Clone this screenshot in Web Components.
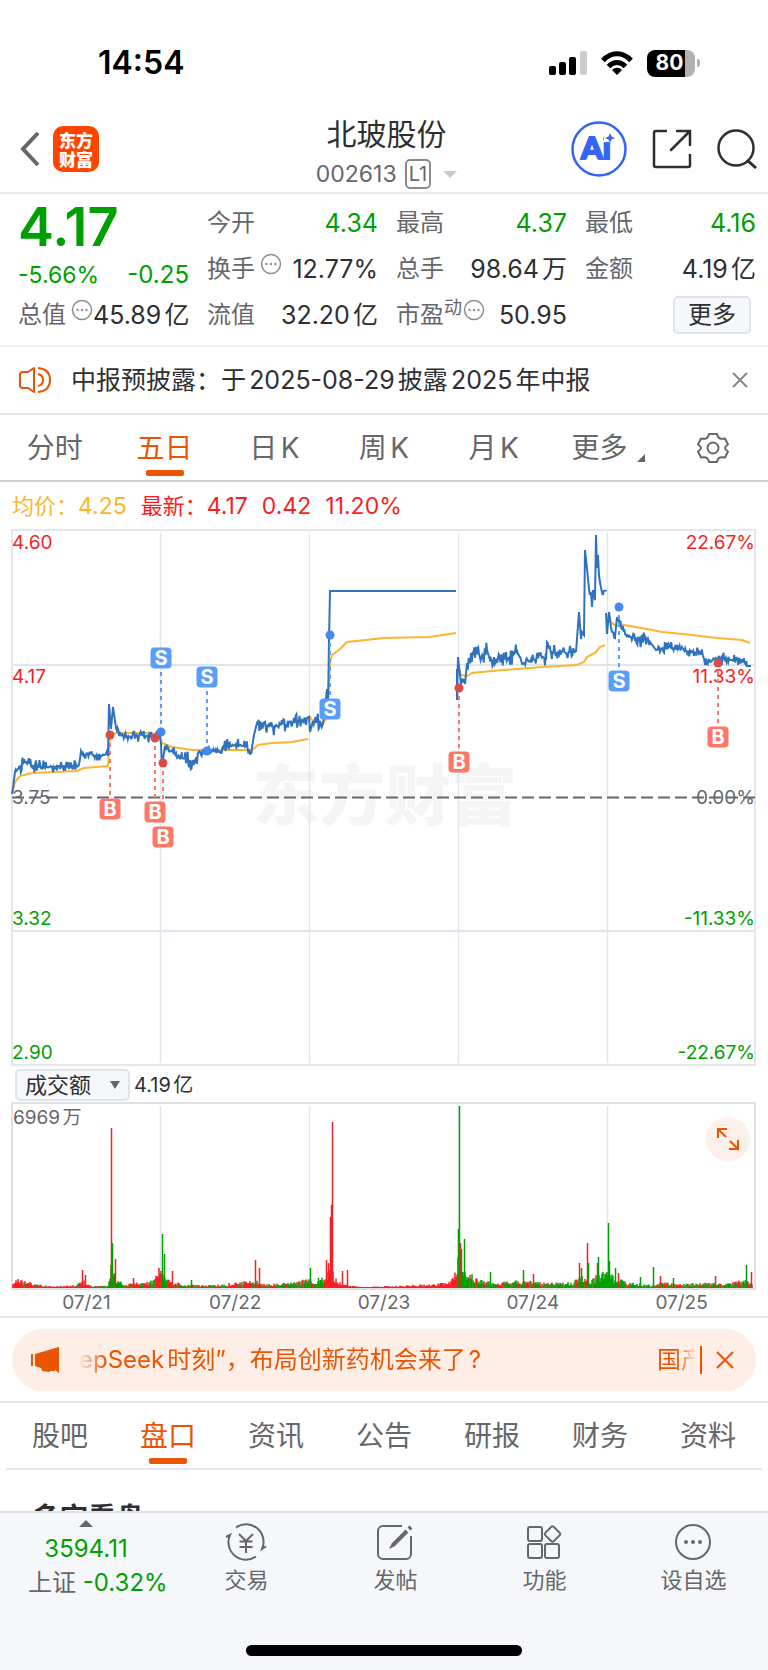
<!DOCTYPE html>
<html lang="zh-CN">
<head>
<meta charset="utf-8">
<meta name="viewport" content="width=device-width, initial-scale=1">
<title>北玻股份 002613</title>
<style>
html, body {
    height: 100%;
    margin: 0;
}

body {
    --orange: #ea5504;
    --green: #00a000;
    --red: #f91e23;
    --text: #2f2f31;
    --muted: #66676a;
    --line: #e6e7ea;
    background: #fff;
    color: var(--text);
    font: 24px/30px Inter, "Noto Sans CJK SC", sans-serif;
    text-autospace: normal;
}
</style>
</head>
<body>

<stock-app></stock-app>

<template id="stock-app">
    <style>
:host { display: flex; flex-direction: column; height: 100vh; overflow: hidden; }
main { flex: 1; min-height: 0; overflow: hidden; }
h2 { margin: 0; padding: 28px 32px 0; font-size: 28px; line-height: 40px; font-weight: 700; }
    </style>
    <status-bar></status-bar>
    <stock-header></stock-header>
    <main>
        <quote-panel></quote-panel>
        <notice-bar>中报预披露：于2025-08-29披露2025年中报</notice-bar>
        <tab-bar class="period" label="周期" style="--tab-line: #ccd0d6">
            <tab-item>分时</tab-item>
            <tab-item active>五日</tab-item>
            <tab-item>日K</tab-item>
            <tab-item>周K</tab-item>
            <tab-item>月K</tab-item>
            <tab-item more>更多</tab-item>
            <tab-item name="设置"><svg width="34" height="34" viewBox="0 0 34 34" fill="none" stroke="#66676a" stroke-width="2" stroke-linejoin="round"><path d="M13 3h8q1 4 3 4.500t5 0l3 6q-3 2-3 3.500t3 3.500l-3 6q-3-.500-5 0T21 31h-8q-1-4-3-4.500t-5 0l-3-6q3-2 3-3.500t-3-3.500l3-6q3 .500 5 0T13 3z"/><circle cx="17" cy="17" r="5.500"/></svg></tab-item>
        </tab-bar>
        <price-chart></price-chart>
        <volume-chart></volume-chart>
        <promo-banner></promo-banner>
        <tab-bar label="栏目" inset>
            <tab-item>股吧</tab-item>
            <tab-item active>盘口</tab-item>
            <tab-item>资讯</tab-item>
            <tab-item>公告</tab-item>
            <tab-item>研报</tab-item>
            <tab-item>财务</tab-item>
            <tab-item>资料</tab-item>
        </tab-bar>
        <h2>多空看盘</h2>
    </main>
    <bottom-bar></bottom-bar>
</template>

<template id="status-bar">
    <style>
:host { display: flex; align-items: center; justify-content: space-between; height: 64px; padding: 31px 68px 5px 98px; color: #000; }
time { font-weight: 600; font-size: 32px; }
div { display: flex; align-items: center; gap: 14px; }
.battery { display: flex; align-items: center; gap: 2px; }
.battery b {
    display: flex; align-items: center; justify-content: center; box-sizing: border-box;
    width: 48px; height: 27px; padding-right: 3px; border-radius: 8px;
    background: linear-gradient(90deg, #000 80%, #b1b1b1 80%);
    color: #fff; font-size: 21px; font-weight: 700;
}
.battery i { width: 3px; height: 8px; border-radius: 0 4px 4px 0; background: #b1b1b1; }
    </style>
    <time>14:54</time>
    <div>
        <svg width="38" height="24" viewBox="0 0 38 24"><rect y="15" width="7" height="9" rx="2"/><rect x="10" y="11" width="7" height="13" rx="2"/><rect x="20" y="6" width="7" height="18" rx="2"/><rect x="31" width="7" height="24" rx="2" fill="#cbcbcb"/></svg>
        <svg width="32" height="24" viewBox="0 0 32 24" fill="none" stroke="#000" stroke-width="5"><path d="M2 9.500C10 .500 22 .500 30 9.500"/><path d="M7.500 15.500c5-5.500 12-5.500 17 0"/><path d="M16 24l-5-5c3-3 7-3 10 0z" fill="#000" stroke="none"/></svg>
        <span class="battery"><b>80</b><i></i></span>
    </div>
</template>

<template id="stock-header">
    <style>
:host {
    display: grid; grid-template-columns: 1fr auto 1fr; align-items: center;
    height: 92px; padding: 0 11px 0 16px; border-bottom: 2px solid #ebebeb;
}
button { border: 0; padding: 0; background: none; display: block; }
svg { display: block; }
.side { display: flex; align-items: center; padding-top: 6px; }
.left { gap: 9px; }
.right { justify-content: flex-end; gap: 25px; }
.logo {
    width: 46px; height: 46px; box-sizing: border-box; padding-top: 4px; border-radius: 10px;
    background: #ff4400; color: #fff; text-align: center;
    font: 900 17px/19px "Noto Sans CJK SC", sans-serif; text-decoration: none;
}
.logo span { display: block; }
.title { padding-top: 12px; text-align: center; }
h1 { margin: 0; font-size: 30px; line-height: 44px; font-weight: 400; }
p { display: flex; align-items: center; justify-content: center; gap: 8px; margin: 0; color: var(--muted); font-size: 23px; line-height: 36px; }
.level { box-sizing: border-box; height: 30px; padding: 0 2px; border: 2px solid #8b8b8d; border-radius: 5px; font-size: 20px; line-height: 26px; }
.caret { margin-left: 4px; border: 7px solid transparent; border-top-color: #c9c9c9; border-bottom: 0; }
    </style>
    <div class="side left">
        <button aria-label="返回"><svg width="28" height="38" viewBox="0 0 28 38" fill="none" stroke="#66676a" stroke-width="4"><path d="M22 3L7 19l15 16"/></svg></button>
        <a class="logo" href="#"><span>东方</span><span>财富</span></a>
    </div>
    <div class="title">
        <h1>北玻股份</h1>
        <p>002613 <span class="level">L1</span><span class="caret"></span></p>
    </div>
    <div class="side right">
        <button aria-label="Ai"><svg width="56" height="56" viewBox="0 0 56 56"><circle cx="28" cy="28" r="26.500" fill="#fff" stroke="#3564f6" stroke-width="2.500"/><text x="10" y="38" font-family="Lato, sans-serif" font-size="31" font-weight="900" fill="#3564f6" stroke="#3564f6" stroke-width="2" stroke-linejoin="round">Ai</text><path d="M33 9h12v12H33z" fill="#fff"/><path d="M39 12l1.500 3.500L44 17l-3.500 1.500L39 22l-1.500-3.500L34 17l3.500-1.500z" fill="#3564f6"/></svg></button>
        <button aria-label="分享"><svg width="40" height="40" viewBox="0 0 40 40" fill="none" stroke="#2f2f31" stroke-width="2.500"><path d="M15 2H4a2 2 0 0 0-2 2v32a2 2 0 0 0 2 2h32a2 2 0 0 0 2-2V25"/><path d="M25 2h13v14M38 2L19 21" stroke-linecap="round"/></svg></button>
        <button aria-label="搜索"><svg width="40" height="40" viewBox="0 0 40 40" fill="none" stroke="#2f2f31" stroke-width="2.500"><circle cx="19" cy="19" r="17.500"/><path d="M30 31l9 8" stroke-width="3"/></svg></button>
    </div>
</template>

<template id="info-dot">
    <style>
:host { display: inline-flex; }
    </style>
    <svg width="22" height="22" viewBox="0 0 22 22"><circle cx="11" cy="11" r="9.500" fill="none" stroke="#8e8e90" stroke-width="1.500"/><g fill="#8e8e90"><circle cx="6.500" cy="11" r="1.200"/><circle cx="11" cy="11" r="1.200"/><circle cx="15.500" cy="11" r="1.200"/></g></svg>
</template>

<template id="quote-item">
    <style>
:host { display: flex; align-items: center; justify-content: space-between; height: 46px; white-space: nowrap; }
.label { display: flex; align-items: center; color: var(--muted); }
.label ::slotted(*) { align-self: flex-start; }
.value { color: var(--quote-color, var(--text)); font-size: 25px; }
    </style>
    <span class="label"><slot name="label"></slot><slot name="mark"></slot></span>
    <span class="value"><slot></slot></span>
</template>

<template id="quote-panel">
    <style>
:host { display: grid; grid-template-columns: repeat(4, minmax(0, 1fr)); grid-auto-rows: 46px; column-gap: 18px; padding: 6px 12px 7px 18px; border-bottom: 2px solid #eceef2; }
.last { grid-row: span 2; color: var(--green); }
strong { display: block; font-size: 54px; line-height: 54px; font-weight: 600; }
.change { display: flex; justify-content: space-between; font-size: 23px; line-height: 42px; }
.change b { font-size: 24px; font-weight: 400; }
.down { --quote-color: var(--green); }
info-dot { margin: -1px 0 0 5px; }
sup { margin-top: -2px; font-size: 18px; line-height: 20px; }
sup + info-dot { margin-left: 1px; }
.more { display: flex; align-items: center; justify-content: flex-end; padding-right: 5px; }
button { width: 78px; height: 38px; padding: 0; border: 2px solid #e0e3e9; border-radius: 5px; background: #f6f7fa; color: var(--text); font: inherit; line-height: 32px; }
    </style>
    <div class="last">
        <strong>4.17</strong>
        <div class="change"><span>-5.66%</span><b>-0.25</b></div>
    </div>
    <quote-item class="down"><span slot="label">今开</span>4.34</quote-item>
    <quote-item class="down"><span slot="label">最高</span>4.37</quote-item>
    <quote-item class="down"><span slot="label">最低</span>4.16</quote-item>
    <quote-item><span slot="label">换手</span><info-dot slot="mark"></info-dot>12.77%</quote-item>
    <quote-item><span slot="label">总手</span>98.64万</quote-item>
    <quote-item><span slot="label">金额</span>4.19亿</quote-item>
    <quote-item><span slot="label">总值</span><info-dot slot="mark"></info-dot>45.89亿</quote-item>
    <quote-item><span slot="label">流值</span>32.20亿</quote-item>
    <quote-item><span slot="label">市盈</span><sup slot="mark">动</sup><info-dot slot="mark"></info-dot>50.95</quote-item>
    <div class="more"><button>更多</button></div>
</template>

<template id="notice-bar">
    <style>
:host { display: flex; align-items: center; height: 66px; padding: 0 18px; border-bottom: 2px solid var(--line); }
p { flex: 1; margin: 0; padding-left: 19px; font-size: 25px; }
button { border: 0; padding: 0; background: none; }
svg { display: block; }
    </style>
    <svg width="34" height="28" viewBox="0 0 34 28" fill="none" stroke="#ea5504" stroke-width="2" stroke-linejoin="round"><path d="M16 2v24l-6-4H5q-3 0-3-3V9q0-3 3-3h5z"/><path d="M20 8q5 1 5 6t-5 6M20 2q12 1 12 12T20 26"/></svg>
    <p><slot></slot></p>
    <button aria-label="关闭"><svg width="20" height="20" viewBox="0 0 20 20" stroke="#86878a" stroke-width="2"><path d="M3 3l14 14M17 3L3 17"/></svg></button>
</template>

<template id="tab-item">
    <style>
:host { display: flex; flex: 1; justify-content: center; }
button {
    display: flex; align-items: center; position: relative; height: 65px; padding: 0;
    border: 0; background: none; color: var(--muted); font: inherit; font-size: 28px; text-autospace: inherit;
    white-space: nowrap;
}
:host([active]) button { color: var(--orange); }
:host([active]) button::after {
    content: ""; position: absolute; bottom: 4px; left: 50%; width: 38px; height: 6px; margin-left: -19px;
    border-radius: 2px; background: var(--orange);
}
i { display: none; align-self: flex-end; margin: 0 -10px 18px 10px; border-style: solid; border-width: 0 0 8px 8px; border-color: transparent transparent var(--muted); }
:host([more]) i { display: block; }
    </style>
    <button role="tab"><slot></slot><i></i></button>
</template>

<template id="tab-bar">
    <style>
:host { display: block; }
div { display: flex; border-bottom: 2px solid var(--tab-line, var(--line)); }
:host([inset]) div { margin: 0 6px; }
    </style>
    <div role="tablist"><slot></slot></div>
</template>

<template id="price-chart">
    <style>
:host { display: block; padding: 0 12px; }
p { display: flex; gap: 14px; margin: 0; height: 48px; align-items: center; color: var(--red); font-size: 22px; white-space: nowrap; }
b { font-size: 23px; font-weight: 400; }
.avg { color: #fdb52e; }
svg { display: block; width: 100%; height: auto; overflow: visible; font-size: 19px; }
    </style>
    <p><span class="avg">均价：<b>4.25</b></span><span>最新：<b>4.17</b></span><b>0.42</b><b>11.20%</b></p>
    <svg viewBox="0 0 744 537" fill="none"></svg>
</template>

<template id="volume-chart">
    <style>
:host { display: block; border-bottom: 2px solid var(--line); }
.bar { display: flex; align-items: center; gap: 4px; height: 36px; padding: 0 15px; font-size: 20px; }
label { display: grid; align-items: center; }
label > * { grid-area: 1 / 1; }
label i { justify-self: end; margin-right: 10px; border: 5px solid transparent; border-top: 8px solid #66676a; border-bottom: 0; pointer-events: none; }
select {
    appearance: none; width: 115px; height: 32px; padding: 0 0 0 8px; border: 2px solid #e0e3e9; border-radius: 5px;
    background: #f6f7fa; color: var(--text); font: inherit; font-size: 22px; line-height: 28px;
}
.plot { position: relative; padding: 0 12px; }
svg { display: block; width: 100%; height: auto; }
.plot > svg { overflow: visible; font-size: 19px; }
button { position: absolute; top: 14px; right: 18px; width: 44px; height: 44px; padding: 10px; border: 0; border-radius: 50%; background: #fdf0ea; }
ol { display: flex; margin: 0; padding: 0 12px; list-style: none; color: var(--muted); font-size: 19px; line-height: 26px; }
li { flex: 1; text-align: center; }
    </style>
    <div class="bar">
        <label><select aria-label="指标"><option>成交额</option></select><i></i></label>
        <span>4.19亿</span>
    </div>
    <div class="plot">
        <svg id="plot" viewBox="0 0 744 187"></svg>
        <button aria-label="全屏"><svg viewBox="0 0 24 24" fill="none" stroke="#ea5504" stroke-width="2"><path d="M2 11V2h9M2 2l8 8M22 13v9h-9M22 22l-8-8"/></svg></button>
    </div>
    <ol><li>07/21</li><li>07/22</li><li>07/23</li><li>07/24</li><li>07/25</li></ol>
</template>

<template id="promo-banner">
    <style>
:host { display: block; padding: 11px 12px 10px; border-bottom: 2px solid var(--line); }
div { display: flex; align-items: center; height: 62px; padding: 0 21px 0 18px; border-radius: 31px; background: #feeee6; color: var(--orange); }
a {
    flex: 1; display: flex; justify-content: space-between; margin-left: 17px; color: inherit; text-decoration: none; white-space: nowrap; overflow: hidden;
    -webkit-mask-image: linear-gradient(90deg, transparent, #000 26px, #000 calc(100% - 22px), transparent);
    mask-image: linear-gradient(90deg, transparent, #000 26px, #000 calc(100% - 22px), transparent);
}
a span + span { margin-right: -8px; }
button { margin-left: 3px; padding: 4px 0 4px 13px; border: 0; border-left: 2px solid var(--orange); background: none; }
svg { display: block; }
    </style>
    <div>
        <svg width="32" height="28" viewBox="0 0 32 28" fill="#ea5504"><path d="M1 8h2v12H1zM5 8L29 1v26l-4-3v1h-4v-1l-1 2-8-1-1-3-6-2z"/></svg>
        <a href="#"><span>epSeek时刻”，布局创新药机会来了?</span><span>国产</span></a>
        <button aria-label="关闭"><svg width="20" height="20" viewBox="0 0 20 20" stroke="#ea5504" stroke-width="2"><path d="M2 2l16 16M18 2L2 18"/></svg></button>
    </div>
</template>

<template id="nav-item">
    <style>
:host { display: flex; flex: 1; justify-content: center; }
a { display: flex; flex-direction: column; align-items: center; gap: 3px; color: var(--muted); font-size: 22px; line-height: 32px; text-decoration: none; }
    </style>
    <a href="#"><slot name="icon"></slot><slot></slot></a>
</template>

<template id="bottom-bar">
    <style>
:host { display: block; padding-bottom: 14px; border-top: 2px solid #dfe1e5; background: #f6f7fb; }
nav { display: flex; height: 132px; }
.index { display: flex; flex-direction: column; box-sizing: border-box; width: 172px; padding: 7px 0 0 28px; color: var(--green); line-height: 34px; text-decoration: none; white-space: nowrap; }
.index > * { width: 116px; text-align: center; }
.index .name { width: auto; text-align: left; }
.caret { display: flex; justify-content: center; height: 12px; }
.caret::before { content: ""; height: 0; border: 7px solid transparent; border-bottom: 7px solid var(--muted); border-top: 0; }
.index i { color: var(--muted); font-style: normal; }
nav-item { padding-top: 10px; }
.home { width: 276px; height: 11px; margin: 0 auto; border-radius: 6px; background: #000; }
    </style>
    <nav>
        <a class="index" href="#"><span class="caret"></span><span>3594.11</span><span class="name"><i>上证</i> -0.32%</span></a>
        <nav-item><svg slot="icon" width="42" height="38" viewBox="0 0 42 38" fill="none" stroke="#66676a" stroke-width="2"><path d="M11 4.500A17.500 17.500 0 0 1 37 26l4-2.500M31 33.500A17.500 17.500 0 0 1 5 12l-4 2"/><path d="M14 11l7 7 7-7M14.500 18.500h13M14.500 24h13M21 18v12"/></svg>交易</nav-item>
        <nav-item><svg slot="icon" width="38" height="38" viewBox="0 0 38 38" fill="none" stroke="#66676a" stroke-width="2"><path d="M26 3H7a5 5 0 0 0-5 5v23a5 5 0 0 0 5 5h23a5 5 0 0 0 5-5V13"/><path d="M31 8L17 22" stroke-width="4"/><path d="M33 6l2-2" stroke-width="4"/><path d="M16 20l-3 6 6-3z" fill="#66676a" stroke="none"/></svg>发帖</nav-item>
        <nav-item><svg slot="icon" width="36" height="38" viewBox="0 0 36 38" fill="none" stroke="#66676a" stroke-width="2"><rect x="2" y="4" width="14" height="14" rx="2"/><rect x="2" y="21" width="14" height="14" rx="2"/><rect x="19" y="21" width="14" height="14" rx="2"/><rect x="20.500" y="5" width="12" height="12" rx="2" transform="rotate(45 26.500 11)"/></svg>功能</nav-item>
        <nav-item><svg slot="icon" width="38" height="38" viewBox="0 0 38 38"><circle cx="19" cy="19" r="17" fill="none" stroke="#66676a" stroke-width="2"/><g fill="#66676a"><circle cx="12" cy="19" r="2"/><circle cx="19" cy="19" r="2"/><circle cx="26" cy="19" r="2"/></g></svg>设自选</nav-item>
    </nav>
    <div class="home"></div>
</template>

<script>

'use strict';

class TemplateElement extends HTMLElement {

    constructor () {
        super();

        const tpl = document.getElementById(this.localName);

        this._root = this.attachShadow({mode: 'open'});
        this._root.appendChild(tpl.content.cloneNode(true));
    }
}

const DAY_LINES = [148, 297, 446, 595];

// small repeatable generator, so the series look the same on each load
function makeRandom (seed) {
    return () => {
        seed = (seed * 16807) % 2147483647;
        return seed / 2147483647;
    };
}

function toPath (points) {
    return points.map((p, i) => (i ? 'L' : 'M') + p[0].toFixed(1) + ' ' + p[1].toFixed(1)).join('');
}

// knots are [x, y, jitter]; jitter holds from that knot to the next one
function jitterLine (knots, rnd) {
    const points = [];

    for (let i = 0; i < knots.length - 1; i++) {
        const [x0, y0, amp = 0] = knots[i];
        const [x1, y1] = knots[i + 1];
        points.push([x0, y0]);
        if (!amp) continue;
        for (let x = x0 + 0.8; x < x1; x += 0.8) {
            const y = y0 + (y1 - y0) * (x - x0) / (x1 - x0);
            const r = rnd() * 2 - 1;
            points.push([x, y + r * Math.abs(r) * amp]);
        }
    }
    points.push(knots[knots.length - 1]);
    return toPath(points);
}

const PRICE = [
    [[0, 264], [1, 258], [3, 242, 2], [8, 237, 8], [16, 232, 7], [25, 237, 7], [65, 237, 6], [70, 222, 6], [82, 225, 6], [96, 225], [97, 174], [99, 199], [101, 177], [104, 198, 7], [111, 205, 7], [148, 207], [149, 214], [150, 236], [153, 216, 5], [161, 222, 6], [170, 228, 9], [181, 232, 8], [188, 222, 5], [195, 220, 5], [208, 222, 8], [218, 215, 7], [240, 217, 3], [242, 205], [245, 193, 9], [261, 197, 9], [278, 192, 7], [290, 190, 8], [297, 187], [298, 202], [301, 191, 9], [311, 194], [315, 159], [316, 178], [317, 110], [318, 61], [444, 61]],
    [[445, 139], [445, 170], [446, 127], [449, 154, 9], [453, 154], [455, 133, 9], [459, 123, 10], [472, 127, 10], [475, 120], [478, 130, 8], [499, 128, 8], [505, 120, 6], [510, 134, 6], [519, 130, 10], [529, 125, 10], [534, 130], [535, 112, 3], [539, 121, 8], [550, 122, 7], [564, 122], [567, 82], [569, 109], [570, 102], [572, 105], [573, 20], [575, 38], [577, 59, 7], [580, 77], [581, 60, 6], [583, 70], [584, 5], [585, 38], [586, 25], [587, 46], [589, 58], [590, 62, 4], [594, 60]],
    [[594, 83], [595, 104], [597, 82], [599, 97, 8], [603, 107], [605, 87], [606, 90, 6], [610, 100, 7], [615, 106, 8], [638, 112], [644, 120, 7], [662, 118, 6], [689, 124, 6], [695, 132, 3], [705, 128, 7], [719, 130, 6], [732, 130, 5], [735, 136], [739, 136]],
];

const AVERAGE = [
    [[0, 264], [3, 252], [8, 246], [20, 243], [65, 241], [72, 238], [96, 236], [98, 205], [104, 203], [140, 203], [148, 206], [150, 213], [160, 217], [180, 220], [240, 220], [246, 215], [260, 213], [280, 212], [296, 209]],
    [[297, 185], [300, 190], [311, 193], [315, 188], [318, 132], [320, 125], [328, 119], [335, 112], [372, 108], [417, 107], [444, 103]],
    [[446, 135], [449, 145], [455, 146], [460, 143], [480, 141], [530, 137], [565, 135], [572, 132], [575, 127], [583, 123], [588, 117], [593, 115]],
    [[599, 92], [604, 96], [612, 95], [635, 99], [650, 102], [680, 105], [705, 108], [730, 110], [738, 113]],
];

// x, trade point y, tag y
const TRADES = [
    ['B', 98, 205, 279], ['B', 143, 208, 282], ['B', 151, 233, 307],
    ['S', 149, 202, 128], ['S', 195, 221, 147], ['S', 318, 105, 179],
    ['B', 447, 158, 232], ['S', 607, 77, 151], ['B', 706, 133, 207],
];

const GRID = '#e3e5ee';

customElements.define('price-chart', class extends TemplateElement {

    connectedCallback () {
        const rnd = makeRandom(2613);
        let out = '<text x="241" y="290" font-size="66" font-weight="900" fill="#f5f5f6">东方财富</text>';

        out += `<rect x="0" y="0" width="743" height="535" stroke="#e6e7ec" stroke-width="2"/>`;
        DAY_LINES.forEach(x => out += `<path d="M${x + 0.5} 3V533" stroke="${GRID}" stroke-width="1.500"/>`);
        out += `<path d="M0 135H743M0 401H743" stroke="${GRID}" stroke-width="2"/>`;
        out += '<path d="M0 267.500H744" stroke="#66676a" stroke-width="2" stroke-dasharray="12 5"/>';

        AVERAGE.forEach(day => out += `<path d="${toPath(day)}" stroke="#fdb52e" stroke-width="2"/>`);
        PRICE.forEach(day => out += `<path d="${jitterLine(day, rnd)}" stroke="#2f72bd" stroke-width="2"/>`);

        [['4.60', '22.67%', 19, '--red'], ['4.17', '11.33%', 153, '--red'], ['3.75', '0.00%', 274, '--muted'],
            ['3.32', '-11.33%', 395, '--green'], ['2.90', '-22.67%', 529, '--green']].forEach(([price, pct, y, color]) => {
            out += `<g style="fill: var(${color})"><text x="0" y="${y}">${price}</text><text x="743" y="${y}" text-anchor="end">${pct}</text></g>`;
        });

        TRADES.forEach(([type, x, y, tagY]) => {
            const color = type === 'B' ? '#fd7767' : '#5a9efb';
            const dot = type === 'B' ? '#d94b4b' : '#4389f0';
            out += `<path d="M${x} ${y}V${tagY}" stroke="${color}" stroke-width="2" stroke-dasharray="4 4"/>
                <circle cx="${x}" cy="${y}" r="4.500" fill="${dot}"/>
                <rect x="${x - 10.5}" y="${tagY - 10.5}" width="21" height="21" rx="4" fill="${color}"/>
                <text x="${x}" y="${tagY + 7}" text-anchor="middle" font-size="20" font-weight="700" fill="#fff">${type}</text>`;
        });

        this._root.querySelector('svg').innerHTML = out;
    }
});

// x, usual bar height, share of red bars
const VOLUME_LEVEL = [
    [0, 12, 1], [7, 9, 0.9], [22, 5, 0.9], [36, 2, 0.9], [62, 3, 0.9], [72, 8, 0.8], [80, 2, 0.6], [96, 3, 0.5],
    [99, 28, 0.2], [104, 12, 0.2], [112, 4, 0.7], [142, 8, 0.8], [150, 28, 0], [154, 9, 0.6], [172, 4, 0.6], [200, 3, 0.7],
    [243, 8, 0.5], [254, 4, 0.6], [284, 6, 0.7], [296, 10, 0.6], [302, 4, 0.4], [313, 14, 0.5], [318, 22, 1], [326, 7, 1],
    [336, 3, 1], [350, 1, 1], [418, 4, 1], [438, 6, 1], [446, 34, 0], [452, 24, 0.1], [458, 17, 0.6], [466, 9, 0.4],
    [484, 6, 0.5], [515, 9, 0.6], [524, 6, 0.4], [560, 6, 0.3], [568, 14, 0.4], [578, 9, 0.2], [586, 15, 0.1], [596, 21, 0],
    [601, 12, 0.2], [614, 7, 0.3], [640, 3, 0.4], [648, 6, 0.5], [670, 4, 0.3], [692, 6, 0.4], [712, 4, 0.6], [730, 8, 0.4], [741, 8, 0.8],
];

const VOLUME_SPIKES = [
    ['r', 70, 18], ['r', 73, 13], ['r', 99, 160], ['g', 100, 45], ['r', 103, 29], ['r', 121, 10], ['g', 150, 54], ['g', 152, 34],
    ['r', 160, 17], ['g', 179, 8], ['r', 243, 28], ['r', 247, 20], ['g', 298, 20], ['g', 306, 10], ['r', 314, 28], ['r', 316, 25],
    ['r', 318, 71], ['r', 319, 83], ['r', 320, 166], ['r', 330, 17], ['r', 335, 18], ['g', 446, 59], ['g', 447, 182],
    ['r', 448, 45], ['g', 449, 39], ['g', 452, 49], ['g', 478, 16], ['g', 511, 18], ['r', 521, 14], ['r', 567, 25],
    ['g', 569, 20], ['r', 575, 45], ['g', 576, 25], ['r', 585, 25], ['g', 586, 31], ['g', 596, 65], ['g', 597, 27],
    ['g', 603, 20], ['r', 606, 15], ['g', 628, 11], ['g', 641, 21], ['r', 648, 12], ['g', 661, 10], ['r', 703, 12],
    ['g', 734, 23], ['r', 739, 16],
];

customElements.define('volume-chart', class extends TemplateElement {

    connectedCallback () {
        const rnd = makeRandom(417);
        const paths = {r: '', g: ''};
        let late = '';
        let out = '';

        for (let x = 1; x < 741; x++) {
            const i = VOLUME_LEVEL.findIndex(k => k[0] > x);
            const [x0, h0, red] = VOLUME_LEVEL[i - 1];
            const [x1, h1] = VOLUME_LEVEL[i];
            const level = h0 + (h1 - h0) * (x - x0) / (x1 - x0);
            const h = Math.max(1, level * (0.35 + 0.65 * rnd()));
            paths[rnd() < red ? 'r' : 'g'] += `M${x} 185v-${h.toFixed(1)}`;
        }
        VOLUME_SPIKES.forEach(([c, x, h]) => late += `<path d="M${x + 0.5} 185v-${h}" stroke="var(${c === 'r' ? '--red' : '--green'})" stroke-width="1.500"/>`);

        out += `<rect x="0" y="0" width="743" height="186" fill="none" stroke="#dfe1e6" stroke-width="2"/>`;
        DAY_LINES.forEach(x => out += `<path d="M${x + 0.5} 3V184" stroke="${GRID}" stroke-width="1.500"/>`);
        out += `<path d="${paths.r}" stroke="var(--red)" stroke-width="1.500"/><path d="${paths.g}" stroke="var(--green)" stroke-width="1.500"/>${late}`;
        out += '<text x="1" y="21" style="fill: var(--muted)">6969万</text>';

        this._root.getElementById('plot').innerHTML = out;
    }
});

customElements.define('tab-item', class extends TemplateElement {

    connectedCallback () {
        const button = this._root.querySelector('button');

        button.setAttribute('aria-selected', this.hasAttribute('active'));
        if (this.hasAttribute('name')) button.setAttribute('aria-label', this.getAttribute('name'));

        button.addEventListener('click', event => {
            for (const tab of this.parentNode.querySelectorAll('tab-item')) {
                tab.toggleAttribute('active', tab === this);
                tab._root.querySelector('button').setAttribute('aria-selected', tab === this);
            }
        });
    }
});

customElements.define('tab-bar', class extends TemplateElement {

    connectedCallback () {
        this._root.querySelector('div').setAttribute('aria-label', this.getAttribute('label'));
    }
});

customElements.define('notice-bar', class extends TemplateElement {

    connectedCallback () {
        this._root.querySelector('button').addEventListener('click', event => this.remove());
    }
});

customElements.define('promo-banner', class extends TemplateElement {

    connectedCallback () {
        this._root.querySelector('button').addEventListener('click', event => this.remove());
    }
});

for (const name of ['info-dot', 'quote-item', 'quote-panel', 'status-bar', 'stock-header', 'nav-item', 'bottom-bar', 'stock-app']) {
    customElements.define(name, class extends TemplateElement {});
}

</script>
</body>
</html>
